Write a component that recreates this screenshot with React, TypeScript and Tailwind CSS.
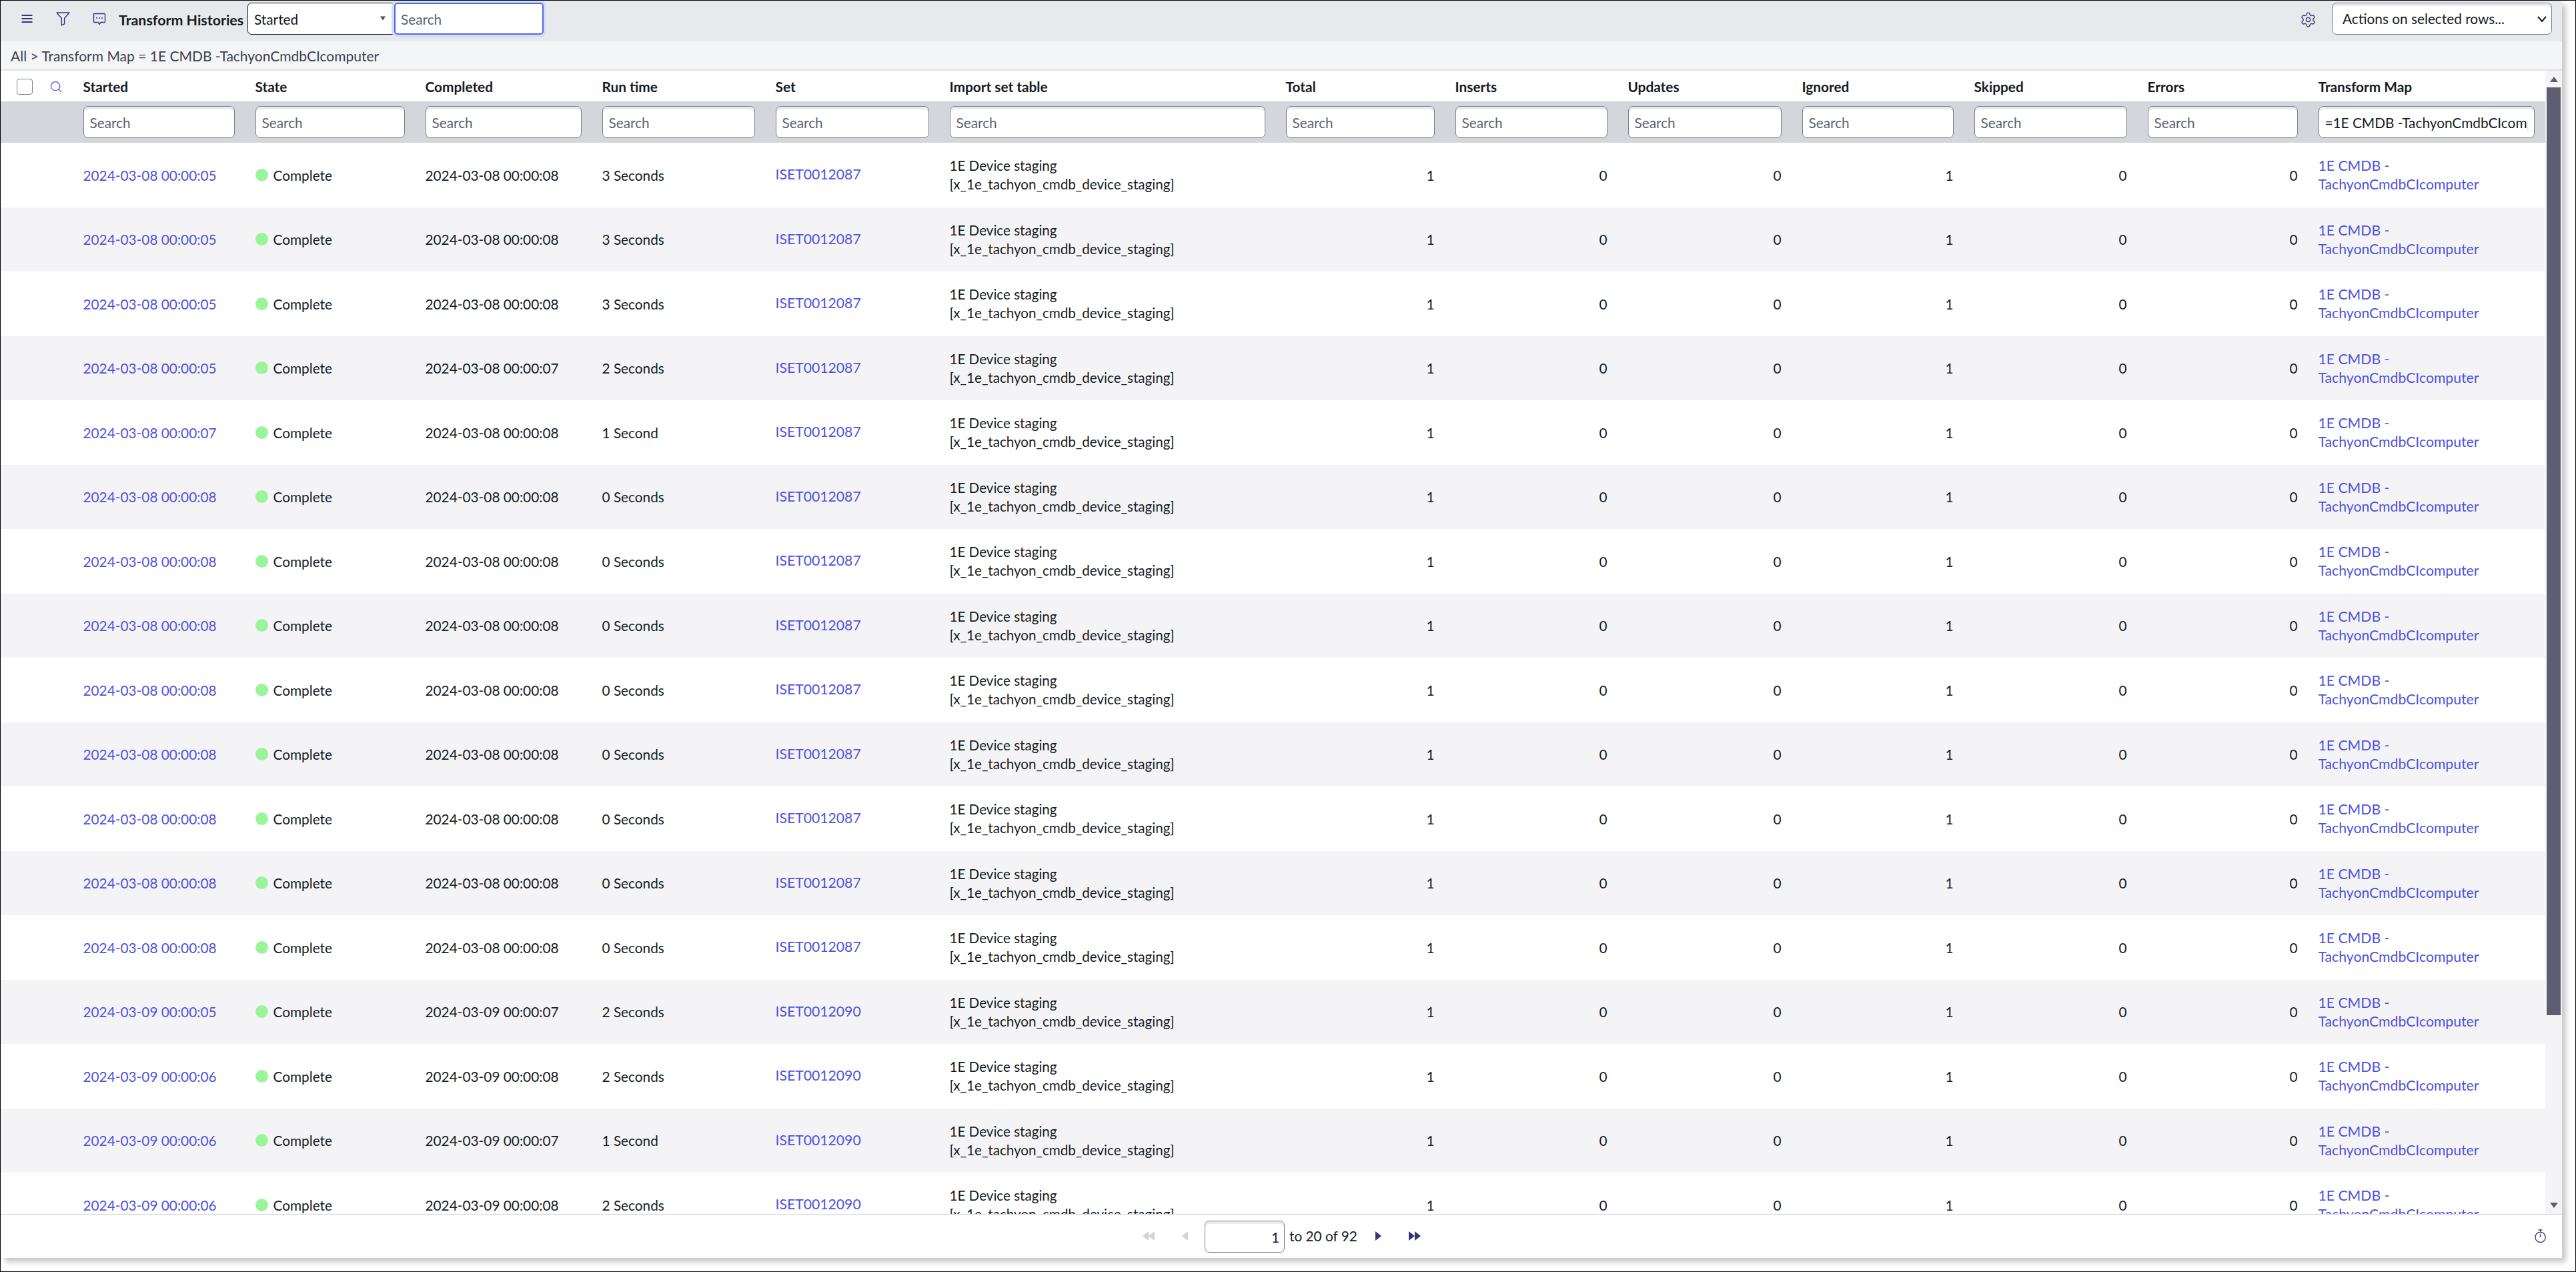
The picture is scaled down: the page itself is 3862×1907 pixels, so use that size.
import { Search, Settings } from "lucide-react";

const gridCols =
  "grid grid-cols-[123.5px_258px_255px_265px_260px_261px_504px_254px_259px_261px_258px_260px_256px_339.5px]";

const headers = [
  "Started",
  "State",
  "Completed",
  "Run time",
  "Set",
  "Import set table",
  "Total",
  "Inserts",
  "Updates",
  "Ignored",
  "Skipped",
  "Errors",
  "Transform Map",
];

const rows = [
  { started: "2024-03-08 00:00:05", completed: "2024-03-08 00:00:08", runTime: "3 Seconds", set: "ISET0012087" },
  { started: "2024-03-08 00:00:05", completed: "2024-03-08 00:00:08", runTime: "3 Seconds", set: "ISET0012087" },
  { started: "2024-03-08 00:00:05", completed: "2024-03-08 00:00:08", runTime: "3 Seconds", set: "ISET0012087" },
  { started: "2024-03-08 00:00:05", completed: "2024-03-08 00:00:07", runTime: "2 Seconds", set: "ISET0012087" },
  { started: "2024-03-08 00:00:07", completed: "2024-03-08 00:00:08", runTime: "1 Second", set: "ISET0012087" },
  { started: "2024-03-08 00:00:08", completed: "2024-03-08 00:00:08", runTime: "0 Seconds", set: "ISET0012087" },
  { started: "2024-03-08 00:00:08", completed: "2024-03-08 00:00:08", runTime: "0 Seconds", set: "ISET0012087" },
  { started: "2024-03-08 00:00:08", completed: "2024-03-08 00:00:08", runTime: "0 Seconds", set: "ISET0012087" },
  { started: "2024-03-08 00:00:08", completed: "2024-03-08 00:00:08", runTime: "0 Seconds", set: "ISET0012087" },
  { started: "2024-03-08 00:00:08", completed: "2024-03-08 00:00:08", runTime: "0 Seconds", set: "ISET0012087" },
  { started: "2024-03-08 00:00:08", completed: "2024-03-08 00:00:08", runTime: "0 Seconds", set: "ISET0012087" },
  { started: "2024-03-08 00:00:08", completed: "2024-03-08 00:00:08", runTime: "0 Seconds", set: "ISET0012087" },
  { started: "2024-03-08 00:00:08", completed: "2024-03-08 00:00:08", runTime: "0 Seconds", set: "ISET0012087" },
  { started: "2024-03-09 00:00:05", completed: "2024-03-09 00:00:07", runTime: "2 Seconds", set: "ISET0012090" },
  { started: "2024-03-09 00:00:06", completed: "2024-03-09 00:00:08", runTime: "2 Seconds", set: "ISET0012090" },
  { started: "2024-03-09 00:00:06", completed: "2024-03-09 00:00:07", runTime: "1 Second", set: "ISET0012090" },
  { started: "2024-03-09 00:00:06", completed: "2024-03-09 00:00:08", runTime: "2 Seconds", set: "ISET0012090" },
];

const counts = [1, 0, 0, 1, 0, 0];

function Triangle({ dir, className }: { dir: "left" | "right"; className?: string }) {
  return (
    <svg viewBox="0 0 9 14" className={className} fill="currentColor">
      {dir === "left" ? <path d="M9 0v14L0 7z" /> : <path d="M0 0v14l9-7z" />}
    </svg>
  );
}

export default function App() {
  return (
    <div className="w-[3862px] h-[1907px] bg-white border border-black font-[Lato,sans-serif] text-[20.8px] text-[#161b22] overflow-hidden">
      <div className="w-[3840px] h-[1885px] flex flex-col bg-white shadow-[6px_6px_8px_rgba(0,0,0,0.22)]">
        {/* Toolbar */}
        <div className="h-[61px] shrink-0 bg-[#e7e9ec] flex items-center relative">
          <svg viewBox="0 0 16 12" className="absolute left-[31px] top-[21px] w-[17px] h-[12px] text-[#35357f]" fill="currentColor">
            <rect width="16" height="2" />
            <rect y="5" width="16" height="2" />
            <rect y="10" width="16" height="2" />
          </svg>
          <svg viewBox="0 0 20 20" className="absolute left-[83px] top-[17px] w-[21px] h-[21px] text-[#35357f]" fill="none" stroke="currentColor" strokeWidth="1.3" strokeLinejoin="round">
            <path d="M1 1h18l-7 8v8l-4 2V9z" />
          </svg>
          <svg viewBox="0 0 20 20" className="absolute left-[138px] top-[18px] w-[20px] h-[20px] text-[#35357f]" fill="none" stroke="currentColor" strokeWidth="1.4" strokeLinejoin="round">
            <path d="M2.5 1.5h15a1 1 0 0 1 1 1v11a1 1 0 0 1-1 1H12l-2 3-2-3H2.5a1 1 0 0 1-1-1v-11a1 1 0 0 1 1-1z" />
            <circle cx="6" cy="8" r="1" fill="currentColor" stroke="none" />
            <circle cx="10" cy="8" r="1" fill="currentColor" stroke="none" />
            <circle cx="14" cy="8" r="1" fill="currentColor" stroke="none" />
          </svg>
          <span className="absolute left-[177px] top-[15px] font-bold text-[21.4px] leading-[28px]">Transform Histories</span>
          <div className="absolute left-[370px] top-[3px] w-[221px] h-[48px] bg-white border border-[#161b22] rounded-l-[6px] flex items-center pl-[9px] pt-[1px]">
            <span>Started</span>
            <svg viewBox="0 0 8 6" className="absolute right-[13px] top-[19px] w-[8px] h-[7px] text-[#4a4d58]" fill="currentColor">
              <path d="M0 0h8L4 6z" />
            </svg>
          </div>
          <input
            placeholder="Search"
            className="absolute left-[590px] top-[3px] w-[224px] h-[48px] bg-white border-2 border-[#4f6ae8] rounded-[5px] pl-[8px] outline-none shadow-[0_0_0_4px_#d5dcf3] placeholder:text-[#5c6370]"
          />
          <Settings className="absolute left-[3447px] top-[16px] w-[25px] h-[25px] text-[#35357f]" strokeWidth={1.3} />
          <div className="absolute left-[3495px] top-[3px] w-[330px] h-[48px] bg-white border border-[#7c808c] rounded-[7px] flex items-center pl-[15px] shadow-[inset_0_4px_0_#e9eaed]">
            <span>Actions on selected rows...</span>
            <svg viewBox="0 0 14 10" className="absolute right-[7px] top-[19px] w-[14px] h-[10px] text-[#161b22]" fill="none" stroke="currentColor" strokeWidth="2">
              <path d="M1 1l6 7 6-7" />
            </svg>
          </div>
        </div>

        {/* Breadcrumb */}
        <div className="h-[44px] shrink-0 bg-[#f4f5f7] border-b-2 border-[#dfe0e4] flex items-center pl-[15px] pt-[1px] text-[21px] text-[#3b3f4a]">
          All &gt; Transform Map = 1E CMDB -TachyonCmdbCIcomputer
        </div>

        {/* List */}
        <div className="flex flex-1 min-h-0">
          <div className="w-[3815px] shrink-0 flex flex-col">
            <div className={`${gridCols} h-[46px] shrink-0 items-center bg-white pt-[1px]`}>
              <div className="flex items-center pl-[24px] gap-[25px]">
                <input type="checkbox" className="appearance-none w-[24px] h-[24px] bg-white border border-[#7c808c] rounded-[4px]" />
                <Search className="w-[20px] h-[20px] text-[#4f52e0]" strokeWidth={1.5} />
              </div>
              {headers.map((h) => (
                <div key={h} className="font-bold">
                  {h}
                </div>
              ))}
            </div>
            <div className={`${gridCols} h-[62px] shrink-0 items-center bg-[#d5d6db]`}>
              <div />
              {headers.map((h, i) => (
                <div key={h} className={i === 12 ? "pr-[15px]" : "pr-[31px]"}>
                  <input
                    placeholder="Search"
                    defaultValue={i === 12 ? "=1E CMDB -TachyonCmdbCIcomputer" : undefined}
                    className="w-full h-[48px] bg-white border border-[#7c808c] rounded-[7px] px-[9px] outline-none shadow-[inset_0_4px_0_#e9eaed] placeholder:text-[#5c6370]"
                  />
                </div>
              ))}
            </div>
            <div className="flex-1 min-h-0 overflow-hidden">
              {rows.map((r, i) => (
                <div key={i} className={`${gridCols} h-[96.5px] items-center ${i % 2 === 0 ? "bg-white" : "bg-[#f4f4f6]"}`}>
                  <div />
                  <a className="text-[#4f52e0]">{r.started}</a>
                  <div className="flex items-center gap-[8px]">
                    <span className="w-[19px] h-[19px] rounded-full bg-[#9af59a]" />
                    Complete
                  </div>
                  <div>{r.completed}</div>
                  <div>{r.runTime}</div>
                  <a className="text-[#4f52e0] text-[21.2px]">{r.set}</a>
                  <div className="text-[20.6px] leading-[28px]">
                    1E Device staging
                    <br />
                    [x_1e_tachyon_cmdb_device_staging]
                  </div>
                  {counts.map((c, j) => (
                    <div key={j} className="text-right pr-[31px]">
                      {c}
                    </div>
                  ))}
                  <a className="text-[#4f52e0] text-[21.2px] leading-[28px] pr-[15px]">1E CMDB - TachyonCmdbCIcomputer</a>
                </div>
              ))}
            </div>
          </div>

          {/* Scrollbar */}
          <div className="flex-1 bg-[#f4f4f6] flex flex-col items-center pt-[9px]">
            <svg viewBox="0 0 12 8" className="w-[12px] h-[8px] text-[#5f5e70]" fill="currentColor">
              <path d="M0 8l6-8 6 8z" />
            </svg>
            <div className="w-[21px] h-[1391px] mt-[8px] bg-[#5f5e70]" />
            <svg viewBox="0 0 12 8" className="w-[12px] h-[8px] mt-auto mb-[9px] text-[#5f5e70]" fill="currentColor">
              <path d="M0 0l6 8 6-8z" />
            </svg>
          </div>
        </div>

        {/* Footer */}
        <div className="h-[66px] shrink-0 bg-white border-t border-[#d5d5e0] flex items-center relative">
          <div className="absolute left-[1712px] top-[25px] flex text-[#cfd0e0]">
            <Triangle dir="left" className="w-[9px] h-[14px]" />
            <Triangle dir="left" className="w-[9px] h-[14px]" />
          </div>
          <Triangle dir="left" className="absolute left-[1771px] top-[25px] w-[9px] h-[14px] text-[#cfd0e0]" />
          <input
            defaultValue="1"
            className="absolute left-[1805px] top-[9px] w-[120px] h-[48px] bg-white border border-[#7c808c] rounded-[7px] px-[7px] text-right outline-none shadow-[inset_0_4px_0_#e9eaed]"
          />
          <span className="absolute left-[1932px] top-[18px] leading-[28px]">to 20 of 92</span>
          <Triangle dir="right" className="absolute left-[2061px] top-[25px] w-[9px] h-[14px] text-[#33337f]" />
          <div className="absolute left-[2111px] top-[25px] flex text-[#33337f]">
            <Triangle dir="right" className="w-[9px] h-[14px]" />
            <Triangle dir="right" className="w-[9px] h-[14px]" />
          </div>
          <svg viewBox="0 0 20 22" className="absolute left-[3798px] top-[21px] w-[19px] h-[22px] text-[#35357f]" fill="none" stroke="currentColor" strokeWidth="1.4">
            <circle cx="10" cy="13" r="8" />
            <path d="M7 1.5h6M10 1.5v3M10 8v5" />
          </svg>
        </div>
      </div>
    </div>
  );
}
